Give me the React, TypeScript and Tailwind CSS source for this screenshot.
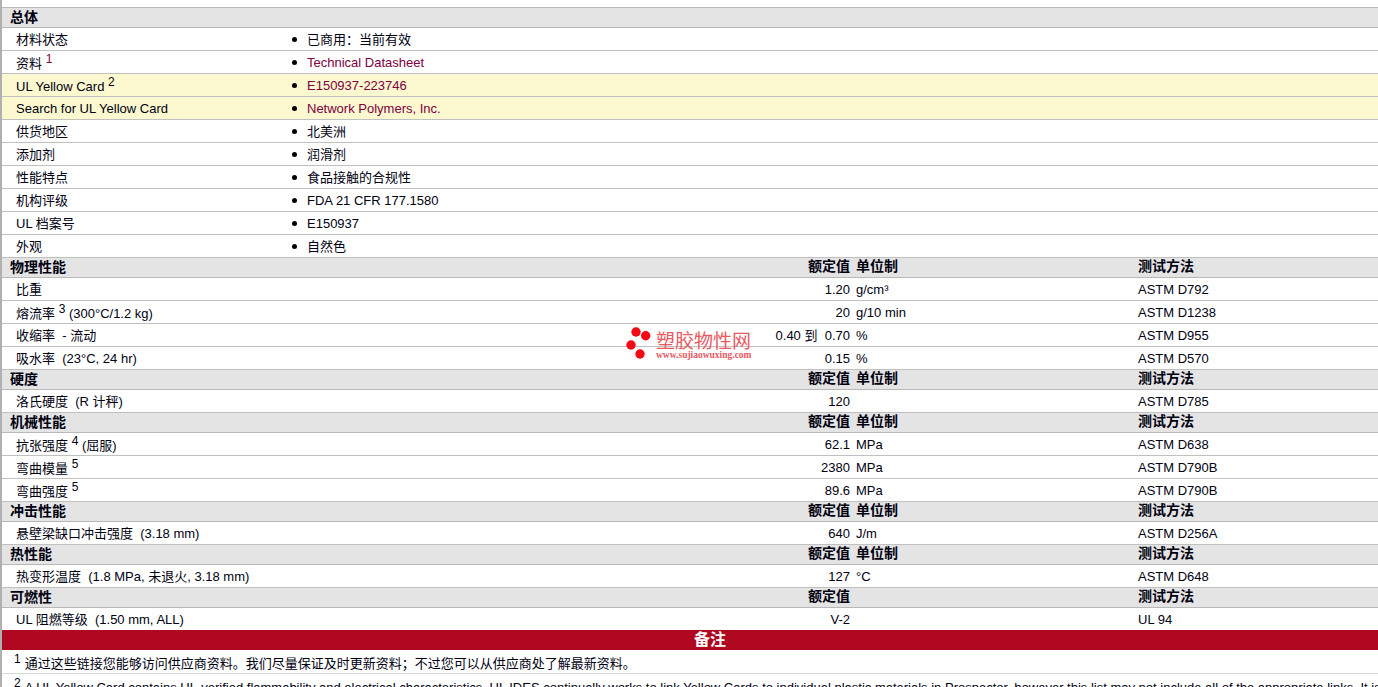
// App.tsx
const font = "font-['Liberation_Sans','Noto_Sans_CJK_SC',sans-serif]";

function Sup({ n, link }: { n: number; link?: boolean }) {
  return <sup className={`relative -top-[5px] align-baseline text-[12px] leading-none ${link ? "text-[#800040]" : ""}`}>{n}</sup>;
}

// labels with a footnote sit a little lower in their row
function Noted({ children }: { children: React.ReactNode }) {
  return <span className="relative top-[1px]">{children}</span>;
}

// section header row: grey band with bold labels
function Section({ title, value, unit, test }: { title: string; value?: string; unit?: string; test?: string }) {
  return (
    <div className="flex h-[20px] items-center border-b border-[#b8b8b8] bg-[#e4e4e4] pb-[2px] pl-[8px] text-[14px] font-bold leading-none">
      <div className="flex-1 whitespace-nowrap">{title}</div>
      <div className="w-[100px] shrink-0 whitespace-nowrap pb-[2px] text-right">{value}</div>
      <div className="w-[288px] shrink-0 whitespace-nowrap pb-[2px] pl-[6px]">{unit}</div>
      <div className="w-[240px] shrink-0 whitespace-nowrap pb-[2px]">{test}</div>
    </div>
  );
}

// general info row with bullet list value
function InfoRow({ label, value, link, yellow }: { label: React.ReactNode; value: string; link?: boolean; yellow?: boolean }) {
  return (
    <div className={`flex h-[23px] items-center border-b border-[#c0c0c0] pt-px ${yellow ? "bg-[#fcf8d0]" : "bg-white"}`}>
      <div className="w-[290px] shrink-0 whitespace-nowrap pl-[14px]">{label}</div>
      <div className="flex w-[15px] shrink-0">
        <span className="h-[5px] w-[5px] rounded-full bg-black" />
      </div>
      <div className={`whitespace-nowrap ${link ? "text-[#800040]" : ""}`}>{value}</div>
    </div>
  );
}

function DataRow({ label, value, unit, test, last }: { label: React.ReactNode; value?: string; unit?: string; test?: string; last?: boolean }) {
  return (
    <div className={`flex items-center bg-white pt-px ${last ? "h-[22px]" : "h-[23px] border-b border-[#c0c0c0]"}`}>
      <div className="flex-1 whitespace-pre pl-[14px]">{label}</div>
      <div className="w-[100px] shrink-0 whitespace-pre text-right">{value}</div>
      <div className="w-[288px] shrink-0 whitespace-nowrap pl-[6px]">{unit}</div>
      <div className="w-[240px] shrink-0 whitespace-nowrap">{test}</div>
    </div>
  );
}

function Watermark() {
  return (
    <div className="pointer-events-none absolute left-[626px] top-[326px] flex items-start gap-[5px]">
      <svg width="25" height="34" viewBox="0 0 25 34" className="shrink-0">
        <circle cx="10" cy="6" r="4.7" fill="#f40a14" />
        <circle cx="19.7" cy="9.7" r="4.7" fill="#f40a14" />
        <circle cx="5" cy="19" r="4.7" fill="#f40a14" />
        <circle cx="14" cy="28" r="4.7" fill="#f40a14" />
      </svg>
      <div className="pt-[7px] text-[#e85a62]">
        <div className="whitespace-nowrap text-[19px] leading-[18px]">塑胶物性网</div>
        <div className="whitespace-nowrap font-['Liberation_Serif',serif] text-[9.5px] font-bold leading-[9px]">www.sujiaowuxing.com</div>
      </div>
    </div>
  );
}

export default function App() {
  return (
    <div className={`${font} relative h-[687px] w-[1378px] overflow-hidden bg-white pl-[2px] pt-[7px] text-[13px] text-[#000010]`}>
      <div className="absolute left-0 top-0 h-full w-[2px] bg-[#b0b0b0]" />
      <div className="border-t border-[#b8b8b8]">
        <Section title="总体" />
        <InfoRow label="材料状态" value="已商用：当前有效" />
        <InfoRow label={<Noted>资料 <Sup n={1} link /></Noted>} value="Technical Datasheet" link />
        <InfoRow label={<Noted>UL Yellow Card <Sup n={2} /></Noted>} value="E150937-223746" link yellow />
        <InfoRow label="Search for UL Yellow Card" value="Network Polymers, Inc." link yellow />
        <InfoRow label="供货地区" value="北美洲" />
        <InfoRow label="添加剂" value="润滑剂" />
        <InfoRow label="性能特点" value="食品接触的合规性" />
        <InfoRow label="机构评级" value="FDA 21 CFR 177.1580" />
        <InfoRow label="UL 档案号" value="E150937" />
        <InfoRow label="外观" value="自然色" />

        <Section title="物理性能" value="额定值" unit="单位制" test="测试方法" />
        <DataRow label="比重" value="1.20" unit="g/cm³" test="ASTM D792" />
        <DataRow label={<Noted>熔流率 <Sup n={3} /> (300°C/1.2 kg)</Noted>} value="20" unit="g/10 min" test="ASTM D1238" />
        <DataRow label="收缩率  - 流动" value="0.40 到  0.70" unit="%" test="ASTM D955" />
        <DataRow label="吸水率  (23°C, 24 hr)" value="0.15" unit="%" test="ASTM D570" />

        <Section title="硬度" value="额定值" unit="单位制" test="测试方法" />
        <DataRow label="洛氏硬度  (R 计秤)" value="120" test="ASTM D785" />

        <Section title="机械性能" value="额定值" unit="单位制" test="测试方法" />
        <DataRow label={<Noted>抗张强度 <Sup n={4} /> (屈服)</Noted>} value="62.1" unit="MPa" test="ASTM D638" />
        <DataRow label={<Noted>弯曲模量 <Sup n={5} /></Noted>} value="2380" unit="MPa" test="ASTM D790B" />
        <DataRow label={<Noted>弯曲强度 <Sup n={5} /></Noted>} value="89.6" unit="MPa" test="ASTM D790B" />

        <Section title="冲击性能" value="额定值" unit="单位制" test="测试方法" />
        <DataRow label="悬壁梁缺口冲击强度  (3.18 mm)" value="640" unit="J/m" test="ASTM D256A" />

        <Section title="热性能" value="额定值" unit="单位制" test="测试方法" />
        <DataRow label="热变形温度  (1.8 MPa, 未退火, 3.18 mm)" value="127" unit="°C" test="ASTM D648" />

        <Section title="可燃性" value="额定值" test="测试方法" />
        <DataRow label="UL 阻燃等级  (1.50 mm, ALL)" value="V-2" test="UL 94" last />

        <div className="h-[20px] bg-[#b00820] pl-[40px] text-center text-[16px] font-bold leading-[20px] text-white">备注</div>
        <div className="flex h-[24px] items-center whitespace-nowrap border-b border-[#d8d8d8] pl-[12px] pt-[5px]">
          <Sup n={1} /><span className="pl-[4px]">通过这些链接您能够访问供应商资料。我们尽量保证及时更新资料；不过您可以从供应商处了解最新资料。</span>
        </div>
        <div className="flex h-[23px] items-center whitespace-nowrap pl-[12px] pt-[4px]">
          <Sup n={2} /><span className="pl-[4px]">A UL Yellow Card contains UL-verified flammability and electrical characteristics. UL IDES continually works to link Yellow Cards to individual plastic materials in Prospector, however this list may not include all of the appropriate links. It is important</span>
        </div>
      </div>
      <Watermark />
    </div>
  );
}
